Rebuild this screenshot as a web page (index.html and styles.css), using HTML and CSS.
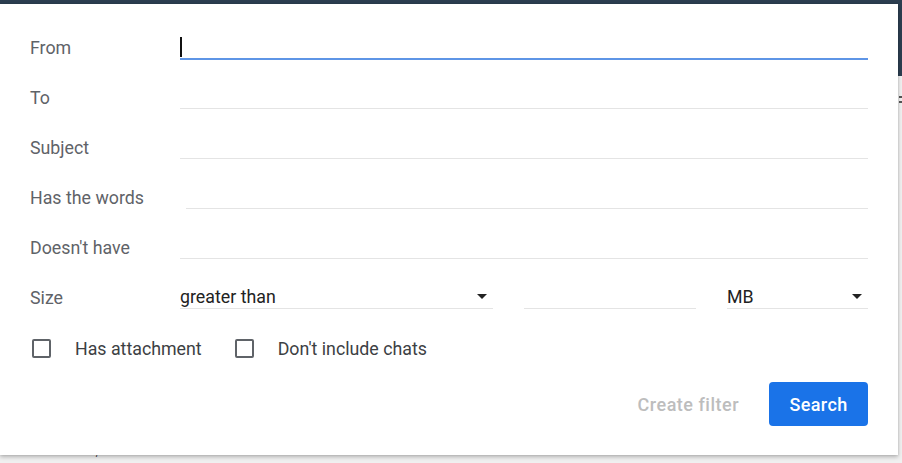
FILE: index.html
```html
<!DOCTYPE html>
<html>
<head>
<meta charset="utf-8">
<link rel="stylesheet" href="styles.css">
</head>
<body>
<div class="page">
  <div class="masthead"></div>
  <div class="content">
    <div class="side-mark"></div>
    <div class="select-line">Select: <a class="lnk">All</a>, <a class="lnk">None</a></div>
  </div>
</div>

<div class="dialog">
  <div class="row">
    <div class="label">From</div>
    <div class="field focused"><span class="caret"></span></div>
  </div>
  <div class="row">
    <div class="label">To</div>
    <div class="field"></div>
  </div>
  <div class="row">
    <div class="label">Subject</div>
    <div class="field"></div>
  </div>
  <div class="row">
    <div class="label">Has the words</div>
    <div class="field shifted"></div>
  </div>
  <div class="row">
    <div class="label">Doesn't have</div>
    <div class="field"></div>
  </div>
  <div class="row">
    <div class="label">Size</div>
    <div class="size-fields">
      <div class="field select sel-op"><span class="val">greater than</span><span class="arrow"></span></div>
      <div class="field sel-num"></div>
      <div class="field select sel-unit"><span class="val">MB</span><span class="arrow"></span></div>
    </div>
  </div>
  <div class="row checks">
    <label class="check"><span class="box"></span><span class="ctext">Has attachment</span></label>
    <label class="check"><span class="box"></span><span class="ctext">Don't include chats</span></label>
  </div>
  <div class="actions">
    <span class="btn-flat">Create filter</span>
    <span class="btn-primary">Search</span>
  </div>
</div>
</body>
</html>
```
FILE: styles.css
```css
html, body {
  margin: 0;
  padding: 0;
}
body {
  width: 902px;
  height: 463px;
  overflow: hidden;
  background: #e9e9e9;
  font-family: Roboto, "Noto Sans", Arial, sans-serif;
  position: relative;
}
.page {
  display: flex;
  flex-direction: column;
  height: 463px;
}
.masthead {
  height: 76px;
  background: #2c3e50;
  flex: none;
}
.content {
  flex: 1;
  background: #f0f0f0;
  position: relative;
}
.side-mark {
  position: absolute;
  right: 0;
  top: 20px;
  width: 3px;
  height: 2px;
  background: #555;
  box-shadow: 0 5px 0 #555;
}
.select-line {
  position: absolute;
  left: 33px;
  top: 366px;
  font-family: Arial, "Liberation Sans", sans-serif;
  font-size: 14px;
  color: #222;
}
.lnk {
  color: #15c;
}

.dialog {
  position: absolute;
  left: 0;
  top: 4px;
  width: 898px;
  height: 451px;
  background: #fff;
  box-shadow: 0 2px 4px rgba(0,0,0,0.25), 0 0 2px rgba(0,0,0,0.1);
  box-sizing: border-box;
  padding: 19px 30px 0 30px;
  display: flex;
  flex-direction: column;
}
.row {
  height: 50px;
  display: flex;
  align-items: flex-start;
  flex: none;
}
.label {
  width: 150px;
  flex: none;
  height: 50px;
  line-height: 50px;
  font-size: 17.8px;
  color: #5f6368;
}
.field {
  flex: 1;
  height: 36px;
  box-sizing: border-box;
  border-bottom: 1px solid #e4e4e4;
  position: relative;
}
.field.focused {
  border-bottom: 2px solid #5e95e6;
  height: 37px;
}
.field.shifted {
  margin-left: 6px;
}
.caret {
  position: absolute;
  left: 0;
  top: 14px;
  width: 2px;
  height: 20px;
  background: #111;
}
.size-fields {
  flex: 1;
  display: flex;
  gap: 31px;
}
.select {
  display: flex;
  align-items: center;
  justify-content: space-between;
  height: 36px;
  padding-top: 12px;
  box-sizing: border-box;
  font-size: 17.8px;
  color: #222;
}
.val {
  line-height: 24px;
}
.arrow {
  width: 0;
  height: 0;
  border-left: 5px solid transparent;
  border-right: 5px solid transparent;
  border-top: 5px solid #222;
  margin-right: 6px;
}
.sel-op {
  flex: none;
  width: 313px;
}
.sel-num {
  flex: none;
  width: 172px;
}
.sel-unit {
  flex: none;
  width: 141px;
}
.checks {
  align-items: center;
  gap: 0;
}
.check {
  display: flex;
  align-items: center;
  font-size: 17.8px;
  color: #3c4043;
  margin-right: 31px;
}
.box {
  width: 19px;
  height: 19px;
  box-sizing: border-box;
  border: 2px solid #5f6368;
  border-radius: 2px;
  margin-left: 2px;
  margin-right: 24px;
}
.actions {
  display: flex;
  justify-content: flex-end;
  align-items: center;
  margin-top: 9px;
}
.btn-flat {
  font-size: 18px;
  font-weight: 500;
  color: #bdbdbd;
  margin-right: 30px;
  letter-spacing: 0.5px;
}
.btn-primary {
  width: 99px;
  height: 44px;
  box-sizing: border-box;
  background: #1a73e8;
  color: #fff;
  border-radius: 4px;
  font-size: 18px;
  font-weight: 500;
  display: flex;
  align-items: center;
  justify-content: center;
  letter-spacing: 0.4px;
}
```
